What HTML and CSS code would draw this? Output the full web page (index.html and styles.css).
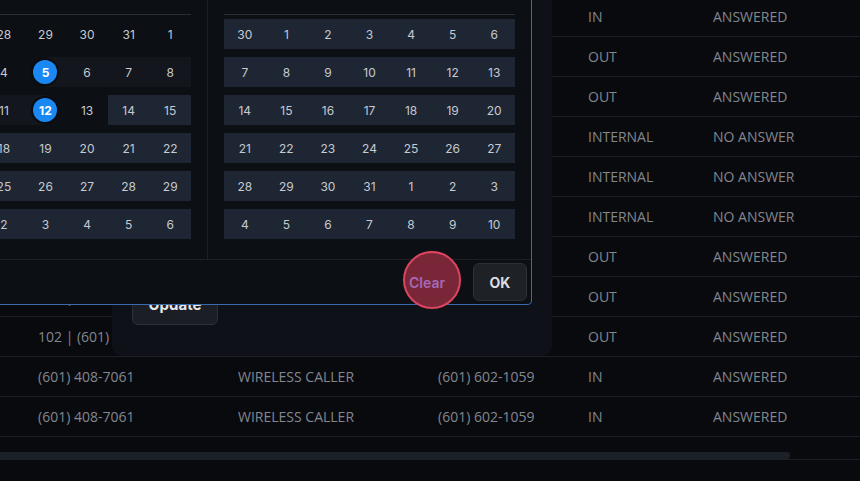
FILE: index.html
```html
<!DOCTYPE html>
<html lang="en">
<head>
<meta charset="utf-8">
<title>Calls</title>
<link rel="stylesheet" href="styles.css">
</head>
<body>
<div class="page">
  <div class="table">
    <div class="row"><span>(601) 408-7061</span><span>WIRELESS CALLER</span><span>(601) 602-1059</span><span>IN</span><span>ANSWERED</span></div>
    <div class="row"><span>101 | (601) 408-7061</span><span>JACKSON MS</span><span>(601) 355-2210</span><span>OUT</span><span>ANSWERED</span></div>
    <div class="row"><span>101 | (601) 408-7061</span><span>JACKSON MS</span><span>(601) 981-4402</span><span>OUT</span><span>ANSWERED</span></div>
    <div class="row"><span>101</span><span>EXT 102</span><span>102</span><span>INTERNAL</span><span>NO ANSWER</span></div>
    <div class="row"><span>101</span><span>EXT 103</span><span>103</span><span>INTERNAL</span><span>NO ANSWER</span></div>
    <div class="row"><span>102</span><span>EXT 101</span><span>101</span><span>INTERNAL</span><span>NO ANSWER</span></div>
    <div class="row"><span>102 | (601) 408-7061</span><span>BRANDON MS</span><span>(601) 825-3317</span><span>OUT</span><span>ANSWERED</span></div>
    <div class="row"><span>102 | (601) 408-7061</span><span>MADISON MS</span><span>(601) 856-0912</span><span>OUT</span><span>ANSWERED</span></div>
    <div class="row"><span>102 | (601) 408-7061</span><span>PEARL MS</span><span>(601) 939-7720</span><span>OUT</span><span>ANSWERED</span></div>
    <div class="row"><span>(601) 408-7061</span><span>WIRELESS CALLER</span><span>(601) 602-1059</span><span>IN</span><span>ANSWERED</span></div>
    <div class="row"><span>(601) 408-7061</span><span>WIRELESS CALLER</span><span>(601) 602-1059</span><span>IN</span><span>ANSWERED</span></div>
  </div>
  <div class="hscroll"><div class="thumb"></div></div>

  <div class="popover">
    <button class="btn update">Update</button>
  </div>

  <div class="picker">
    <div class="months">
      <div class="month">
        <div class="mhead">November 2025</div>
        <div class="wdays"><span>Su</span><span>Mo</span><span>Tu</span><span>We</span><span>Th</span><span>Fr</span><span>Sa</span></div>
        <div class="weeks">
          <span class="d">26</span><span class="d">27</span><span class="d">28</span><span class="d">29</span><span class="d">30</span><span class="d">31</span><span class="d">1</span>
          <span class="d">2</span><span class="d">3</span><span class="d">4</span><span class="d sel start"><b>5</b></span><span class="d s">6</span><span class="d s">7</span><span class="d s">8</span>
          <span class="d s">9</span><span class="d s">10</span><span class="d s">11</span><span class="d sel end"><b>12</b></span><span class="d">13</span><span class="d r">14</span><span class="d r">15</span>
          <span class="d r">16</span><span class="d r">17</span><span class="d r">18</span><span class="d r">19</span><span class="d r">20</span><span class="d r">21</span><span class="d r">22</span>
          <span class="d r">23</span><span class="d r">24</span><span class="d r">25</span><span class="d r">26</span><span class="d r">27</span><span class="d r">28</span><span class="d r">29</span>
          <span class="d r">30</span><span class="d r">1</span><span class="d r">2</span><span class="d r">3</span><span class="d r">4</span><span class="d r">5</span><span class="d r">6</span>
        </div>
      </div>
      <div class="month">
        <div class="mhead">December 2025</div>
        <div class="wdays"><span>Su</span><span>Mo</span><span>Tu</span><span>We</span><span>Th</span><span>Fr</span><span>Sa</span></div>
        <div class="weeks">
          <span class="d r">30</span><span class="d r">1</span><span class="d r">2</span><span class="d r">3</span><span class="d r">4</span><span class="d r">5</span><span class="d r">6</span>
          <span class="d r">7</span><span class="d r">8</span><span class="d r">9</span><span class="d r">10</span><span class="d r">11</span><span class="d r">12</span><span class="d r">13</span>
          <span class="d r">14</span><span class="d r">15</span><span class="d r">16</span><span class="d r">17</span><span class="d r">18</span><span class="d r">19</span><span class="d r">20</span>
          <span class="d r">21</span><span class="d r">22</span><span class="d r">23</span><span class="d r">24</span><span class="d r">25</span><span class="d r">26</span><span class="d r">27</span>
          <span class="d r">28</span><span class="d r">29</span><span class="d r">30</span><span class="d r">31</span><span class="d r">1</span><span class="d r">2</span><span class="d r">3</span>
          <span class="d r">4</span><span class="d r">5</span><span class="d r">6</span><span class="d r">7</span><span class="d r">8</span><span class="d r">9</span><span class="d r">10</span>
        </div>
      </div>
    </div>
    <div class="foot">
      <button class="btn clear"><span>Clear</span></button>
      <button class="btn ok">OK</button>
    </div>
  </div>
</div>
</body>
</html>
```

FILE: styles.css
```css
* { box-sizing: border-box; }
html, body { margin: 0; padding: 0; }
body {
  background: #090a0e;
  width: 860px;
  height: 481px;
  overflow: hidden;
  font-family: "Open Sans", "Liberation Sans", sans-serif;
}
.page {
  position: relative;
  width: 860px;
  height: 481px;
  overflow: hidden;
}
.table {
  margin-top: -4px;
}
.row {
  display: grid;
  grid-template-columns: 200px 200px 150px 125px 1fr;
  padding-left: 38px;
  height: 40px;
  align-items: center;
  border-bottom: 1px solid #1c1f25;
  color: #82878f;
  font-size: 14px;
  white-space: nowrap;
}
.row:first-child { height: 41px; }
.row span { overflow: hidden; }
.hscroll {
  margin-top: 15px;
  height: 8px;
  border-bottom: 1px solid #1d2127;
}
.thumb {
  width: 790px;
  height: 7px;
  background: #1b2029;
  border-radius: 0 3px 3px 0;
}

/* popover behind picker */
.popover {
  position: absolute;
  left: 112px;
  top: -120px;
  width: 440px;
  height: 476px;
  background: #0e1117;
  border-radius: 10px;
  display: flex;
  flex-direction: column;
  justify-content: flex-end;
  align-items: flex-start;
  padding: 0 20px 31px;
}
.btn {
  font-family: "Inter", "Lato", sans-serif;
  font-weight: 700;
  border-radius: 6px;
  cursor: pointer;
}
.update {
  width: 86px;
  height: 38px;
  background: #1b1e24;
  border: 1px solid #2c3037;
  color: #e4e6ea;
  font-size: 15px;
  padding: 0 0 3px;
}

/* date range picker */
.picker {
  position: absolute;
  left: -117px;
  top: -65px;
  width: 649px;
  background: #0c0f14;
  border: 1px solid #3a6aae;
  border-radius: 4px;
  font-family: "Inter", "Lato", sans-serif;
}
.months { display: flex; }
.month {
  width: 323px;
  padding: 12px 16px 20px;
}
.month:first-child {
  width: 324px;
  border-right: 1px solid #1b1f26;
}
.mhead {
  height: 36px;
  display: flex;
  align-items: center;
  justify-content: center;
  color: #dfe2e6;
  font-weight: 600;
  font-size: 14px;
}
.wdays {
  display: grid;
  grid-template-columns: repeat(7, 1fr);
  height: 31px;
  border-bottom: 1px solid #2a2f37;
  color: #8a9099;
  font-size: 12px;
  line-height: 14px;
  align-items: start;
  justify-items: center;
}
.weeks {
  margin-top: 4px;
  display: grid;
  grid-template-columns: repeat(7, 1fr);
  grid-auto-rows: 30px;
  row-gap: 8px;
}
.d {
  display: flex;
  align-items: center;
  justify-content: center;
  color: #c6cad1;
  font-size: 12px;
}
.d.r { background: #1e2633; }
.d.s { background: #13161c; }
.d.start { background: linear-gradient(to right, transparent 50%, #13161c 50%); }
.d.end { background: linear-gradient(to right, #13161c 50%, transparent 50%); }
.d.sel b {
  width: 24px;
  height: 24px;
  border-radius: 50%;
  background: #1a88f2;
  color: #ffffff;
  font-weight: 700;
  display: flex;
  align-items: center;
  justify-content: center;
  box-shadow: 0 0 0 2px #0a0c11;
}
.foot {
  height: 45px;
  border-top: 1px solid #1b1f26;
  display: flex;
  justify-content: flex-end;
  align-items: center;
  gap: 19px;
  padding-right: 4px;
}
.clear {
  position: relative;
  width: 54px;
  height: 38px;
  background: transparent;
  border: 0;
  padding: 0;
  font-size: 14px;
  font-weight: 600;
  color: #a46ab6;
}
.clear::before {
  content: "";
  position: absolute;
  left: 3px;
  top: -12px;
  width: 54px;
  height: 54px;
  border-radius: 50%;
  background: #7a2639;
  border: 2px solid #db455e;
}
.clear span { position: relative; }
.ok {
  width: 54px;
  height: 38px;
  background: #1e2126;
  border: 1px solid #2c3037;
  color: #dcdee2;
  font-size: 14px;
  padding: 0;
}
```
